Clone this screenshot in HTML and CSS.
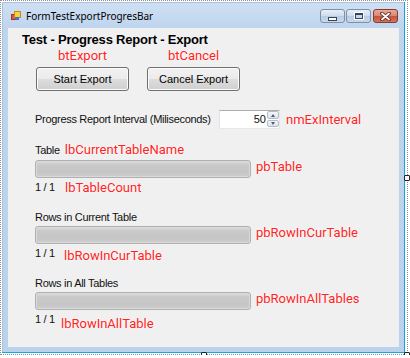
FILE: index.html
```html
<!DOCTYPE html>
<html>
<head>
    <title>FormTestExportProgresBar</title>
    <link rel="stylesheet" href="styles.css">
</head>
<body>
    <div class="surface">
        <div class="window">
            <div class="titlebar">
                <svg class="app-icon" width="10" height="10" viewBox="0 0 10 10">
                    <rect x="0.5" y="3.5" width="5" height="5" fill="#e0563a" stroke="#a8301c"/>
                    <rect x="3.5" y="0.5" width="6" height="6" fill="#f8d23a" stroke="#c98a10"/>
                    <rect x="4" y="6" width="4" height="3" fill="#3d72d6"/>
                </svg>
                <span class="title">FormTestExportProgresBar</span>
                <div class="caption">
                    <span class="cap cap-min"><i></i></span>
                    <span class="cap cap-max"><i></i></span>
                    <span class="cap cap-close">
                        <svg width="11" height="9" viewBox="0 0 11 9">
                            <path d="M2 1.5 L9 7.5 M9 1.5 L2 7.5" stroke="#5a2418" stroke-width="3.6" stroke-linecap="round"/>
                            <path d="M2 1.5 L9 7.5 M9 1.5 L2 7.5" stroke="#ffffff" stroke-width="1.8" stroke-linecap="round"/>
                        </svg>
                    </span>
                </div>
            </div>
            <div class="client">
                <h1>Test - Progress Report - Export</h1>

                <div class="btn-row">
                    <div class="btn-col">
                        <span class="tag">btExport</span>
                        <button class="btn">Start Export</button>
                    </div>
                    <div class="btn-col">
                        <span class="tag">btCancel</span>
                        <button class="btn">Cancel Export</button>
                    </div>
                </div>

                <div class="interval-row">
                    <span class="lbl lbl-interval">Progress Report Interval (Miliseconds)</span>
                    <div class="nud">
                        <span class="nud-value">50</span>
                        <div class="nud-spin">
                            <span class="spin spin-up"></span>
                            <span class="spin spin-down"></span>
                        </div>
                    </div>
                    <span class="tag">nmExInterval</span>
                </div>

                <div class="group group-first">
                    <div class="label-row">
                        <span class="lbl">Table</span>
                        <span class="tag">lbCurrentTableName</span>
                    </div>
                    <div class="bar-row">
                        <div class="bar"></div>
                        <span class="tag">pbTable</span>
                    </div>
                    <div class="count-row">
                        <span class="lbl count">1 / 1</span>
                        <span class="tag count-tag-1">lbTableCount</span>
                    </div>
                </div>

                <div class="group">
                    <div class="label-row plain">
                        <span class="lbl">Rows in Current Table</span>
                    </div>
                    <div class="bar-row">
                        <div class="bar"></div>
                        <span class="tag">pbRowInCurTable</span>
                    </div>
                    <div class="count-row">
                        <span class="lbl count">1 / 1</span>
                        <span class="tag count-tag-2">lbRowInCurTable</span>
                    </div>
                </div>

                <div class="group">
                    <div class="label-row plain">
                        <span class="lbl">Rows in All Tables</span>
                    </div>
                    <div class="bar-row">
                        <div class="bar"></div>
                        <span class="tag">pbRowInAllTables</span>
                    </div>
                    <div class="count-row">
                        <span class="lbl count">1 / 1</span>
                        <span class="tag count-tag-3">lbRowInAllTable</span>
                    </div>
                </div>
            </div>
        </div>

        <span class="handle handle-right"></span>
        <span class="handle handle-bottom"></span>
        <span class="handle handle-corner"></span>
    </div>
</body>
</html>
```

FILE: styles.css
```css
body {
    margin: 0;
    background-color: #fff;
    font-family: "Liberation Sans", Arial, sans-serif;
}

/* designer surface with the dotted selection outline */
.surface {
    position: relative;
    width: 404px;
    height: 351px;
    padding: 1px;
    border: 1px dotted #8e8e8e;
}

.handle {
    position: absolute;
    width: 4px;
    height: 4px;
    background-color: #fff;
    border: 1px solid #222;
    border-radius: 1px;
}

.handle-right {
    left: 403px;
    top: 174px;
}

.handle-bottom {
    left: 200px;
    top: 351px;
}

.handle-corner {
    left: 403px;
    top: 351px;
}

/* window frame */
.window {
    width: 391px;
    padding: 0 5px 5px 6px;
    background: linear-gradient(#cfe0f3 0px, #bfd5ee 26px, #bad2ec 100%);
    border-right: 1px solid #1ba3e0;
    border-bottom: 1px solid #1ba3e0;
    box-shadow: inset 1px 1px 0 #a9c1dc;
}

.titlebar {
    display: flex;
    align-items: flex-start;
    height: 26px;
    padding-left: 3px;
}

.app-icon {
    margin-top: 9px;
}

.title {
    margin: 8px 0 0 5px;
    font-family: "Noto Sans", "Open Sans", sans-serif;
    font-size: 10px;
    line-height: 12px;
    color: #000;
}

.caption {
    display: flex;
    gap: 1px;
    margin: 7px 1px 0 auto;
}

.cap {
    display: flex;
    align-items: center;
    justify-content: center;
    width: 25px;
    height: 14px;
    box-sizing: border-box;
    border: 1px solid #7c90ab;
    border-radius: 3px;
    background: linear-gradient(#e6eef8, #cfdcec 50%, #b9cbe1 51%, #c8d8ec);
}

.cap-min i {
    display: block;
    width: 7px;
    height: 2px;
    margin-top: 5px;
    background-color: #fff;
    border: 1px solid #34465e;
}

.cap-max i {
    display: block;
    width: 6px;
    height: 3px;
    background-color: #c8d8ec;
    border: 1px solid #34465e;
    border-top-width: 2px;
    box-shadow: 0 0 0 1px #fff;
}

.cap-close {
    margin-left: 1px;
    border-color: #8a3a2c;
    background: linear-gradient(#eaa899, #d9846f 50%, #c4513b 51%, #d6765d);
}

/* client area */
.client {
    height: 319px;
    background-color: #f0f0f0;
    color: #111;
    font-size: 11px;
}

h1 {
    margin: 0;
    padding: 4px 0 0 14px;
    font-size: 13px;
    line-height: 16px;
    letter-spacing: -0.2px;
    font-weight: bold;
    color: #000;
}

.tag {
    font-family: Roboto, "Noto Sans", sans-serif;
    font-size: 13px;
    line-height: 15px;
    color: #ff2222;
    text-shadow: 0 0 2px #fff, 0 0 1px #fff;
    white-space: nowrap;
}

.lbl {
    line-height: 15px;
    letter-spacing: -0.3px;
    white-space: nowrap;
}

.btn-row {
    display: flex;
    gap: 18px;
    padding-left: 28px;
}

.btn-col {
    display: flex;
    flex-direction: column;
    align-items: center;
    width: 93px;
}

.btn-col .tag {
    margin-bottom: 4px;
}

.btn {
    width: 93px;
    height: 24px;
    padding: 0;
    font-family: "Liberation Sans", Arial, sans-serif;
    font-size: 11px;
    color: #000;
    border: 1px solid #707070;
    border-radius: 3px;
    background: linear-gradient(#f2f2f2, #ebebeb 50%, #dddddd 51%, #cfcfcf);
    box-shadow: inset 0 0 0 1px #fbfbfb;
}

.interval-row {
    display: flex;
    align-items: center;
    height: 20px;
    margin-top: 18px;
    padding-left: 27px;
}

.lbl-interval {
    width: 184px;
}

.nud {
    display: flex;
    align-items: center;
    width: 61px;
    height: 19px;
    box-sizing: border-box;
    border: 1px solid #abadb3;
    border-color: #abadb3 #e3e9ef #e3e9ef #e2e3ea;
    background-color: #fff;
}

.nud-value {
    flex: 1;
    text-align: right;
    padding-right: 1px;
}

.nud-spin {
    display: flex;
    flex-direction: column;
    gap: 1px;
    width: 12px;
    height: 16px;
}

.spin {
    position: relative;
    flex: 1;
    border: 1px solid #b6bcc6;
    border-radius: 2px;
    background: linear-gradient(#f4f6f9, #dde3eb);
}

.spin::after {
    content: "";
    position: absolute;
    left: 3px;
    top: 2px;
    border-left: 2px solid transparent;
    border-right: 2px solid transparent;
}

.spin-up::after {
    border-bottom: 3px solid #4c607a;
}

.spin-down::after {
    top: 1px;
    border-top: 3px solid #4c607a;
}

.interval-row .tag {
    margin-left: 6px;
}

.group {
    padding-left: 27px;
}

.group-first {
    margin-top: 13px;
}

.label-row {
    display: flex;
    align-items: baseline;
    height: 18px;
    box-sizing: border-box;
}

.label-row.plain {
    padding-top: 2px;
}

.label-row .tag {
    margin-left: 5px;
}

.bar-row {
    display: flex;
    align-items: flex-start;
    height: 18px;
}

.bar {
    width: 216px;
    height: 18px;
    box-sizing: border-box;
    border: 1px solid #b0b0b0;
    border-radius: 3px;
    background: linear-gradient(#dedede, #c9c9c9 4px, #c6c6c6 70%, #cecece);
    box-shadow: inset 0 0 0 1px #dadada;
}

.bar-row .tag {
    margin: -1px 0 0 5px;
}

.count-row {
    display: flex;
    align-items: flex-start;
    height: 30px;
}

.count {
    width: 21px;
    margin-top: 2px;
}

.count-tag-1 {
    margin: 2px 0 0 9px;
}

.count-tag-2 {
    margin: 4px 0 0 8px;
}

.count-tag-3 {
    margin: 6px 0 0 5px;
}
```
